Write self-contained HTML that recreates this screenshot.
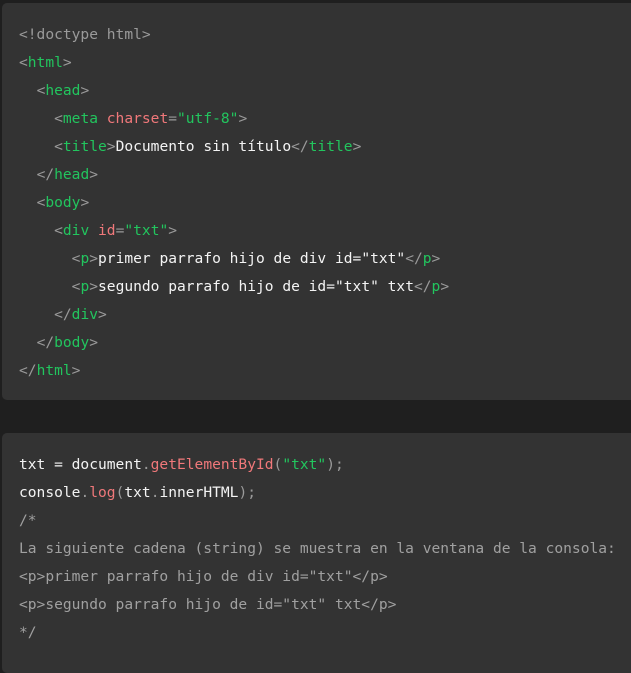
<!DOCTYPE html>
<html><head><meta charset="utf-8"><style>
body{margin:0;background:#1f1f1f;width:631px;height:655px;overflow:hidden;font-family:"DejaVu Sans Mono",monospace;font-size:14.58px;}
.box{position:absolute;left:2px;width:640px;background:#333;border-radius:5px;color:#f4f4f4;}
pre{margin:0;font:inherit;line-height:28px;padding-left:17px;white-space:pre;}
.g{color:#9a9a9a}.t{color:#22c55e}.a{color:#f0787a}.s{color:#22c55e}.c{color:#a0a0a0}
</style></head><body>
<div class="box" style="top:3px;height:397px"><pre style="padding-top:18px"><span class="g">&lt;!doctype html&gt;</span>
<span class="g">&lt;</span><span class="t">html</span><span class="g">&gt;</span>
  <span class="g">&lt;</span><span class="t">head</span><span class="g">&gt;</span>
    <span class="g">&lt;</span><span class="t">meta</span> <span class="a">charset</span><span class="g">=</span><span class="s">"utf-8"</span><span class="g">&gt;</span>
    <span class="g">&lt;</span><span class="t">title</span><span class="g">&gt;</span>Documento sin título<span class="g">&lt;/</span><span class="t">title</span><span class="g">&gt;</span>
  <span class="g">&lt;/</span><span class="t">head</span><span class="g">&gt;</span>
  <span class="g">&lt;</span><span class="t">body</span><span class="g">&gt;</span>
    <span class="g">&lt;</span><span class="t">div</span> <span class="a">id</span><span class="g">=</span><span class="s">"txt"</span><span class="g">&gt;</span>
      <span class="g">&lt;</span><span class="t">p</span><span class="g">&gt;</span>primer parrafo hijo de div id="txt"<span class="g">&lt;/</span><span class="t">p</span><span class="g">&gt;</span>
      <span class="g">&lt;</span><span class="t">p</span><span class="g">&gt;</span>segundo parrafo hijo de id="txt" txt<span class="g">&lt;/</span><span class="t">p</span><span class="g">&gt;</span>
    <span class="g">&lt;/</span><span class="t">div</span><span class="g">&gt;</span>
  <span class="g">&lt;/</span><span class="t">body</span><span class="g">&gt;</span>
<span class="g">&lt;/</span><span class="t">html</span><span class="g">&gt;</span></pre></div>
<div class="box" style="top:433px;height:240px"><pre style="padding-top:18px">txt = document<span class="g">.</span><span class="a">getElementById</span><span class="g">(</span><span class="s">"txt"</span><span class="g">);</span>
console<span class="g">.</span><span class="a">log</span><span class="g">(</span>txt<span class="g">.</span>innerHTML<span class="g">);</span>
<span class="c">/*
La siguiente cadena (string) se muestra en la ventana de la consola:
&lt;p&gt;primer parrafo hijo de div id="txt"&lt;/p&gt;
&lt;p&gt;segundo parrafo hijo de id="txt" txt&lt;/p&gt;
*/</span></pre></div>
</body></html>
